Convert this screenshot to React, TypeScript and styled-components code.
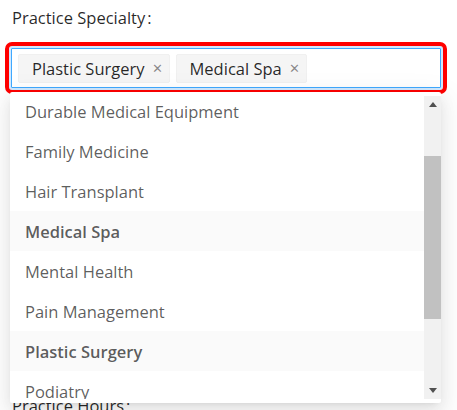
import React from "react";
import styled, { createGlobalStyle } from "styled-components";

const Global = createGlobalStyle`
  html, body { margin: 0; padding: 0; background: #fff; }
  body { font-family: "Open Sans", "Noto Sans", sans-serif; font-size: 16.5px; overflow: hidden; }
  * { box-sizing: border-box; }
`;

const Page = styled.div`
  width: 457px;
  height: 410px;
  padding: 0 16px 0 11px;
  overflow: hidden;
`;

const FormItem = styled.div<{ $gap?: number }>`
  display: flex;
  flex-direction: column;
  margin-bottom: ${(p) => p.$gap ?? 0}px;
`;

const Label = styled.label<{ $top?: number }>`
  display: block;
  padding-top: ${(p) => p.$top ?? 0}px;
  padding-left: 1px;
  line-height: 24px;
  font-size: 16.5px;
  color: rgba(0, 0, 0, 0.85);
  &::after {
    content: ":";
    margin: 0 8px 0 2px;
  }
`;

const SelectWrap = styled.div`
  position: relative;
  margin-top: 18px;
`;

const SelectBox = styled.div`
  display: flex;
  align-items: center;
  gap: 6px;
  width: 430px;
  height: 40px;
  padding: 0 6px;
  border: 1px solid #40a9ff;
  border-radius: 1px;
  background: #fff;
  box-shadow: 0 0 0 2px rgba(24, 144, 255, 0.2);
  outline: 4px solid #ff0000;
  outline-offset: 2px;
`;

const Tag = styled.span`
  display: inline-flex;
  align-items: center;
  height: 29px;
  padding: 0 6px 0 13px;
  background: #f5f5f5;
  border: 1px solid #f0f0f0;
  border-radius: 2px;
  color: rgba(0, 0, 0, 0.85);
  font-size: 16.5px;
  white-space: nowrap;
`;

const TagClose = styled.span`
  margin-left: 7px;
  color: rgba(0, 0, 0, 0.45);
  font-size: 13px;
  line-height: 1;
`;

const Dropdown = styled.div`
  position: absolute;
  z-index: 10;
  top: calc(100% + 4px);
  left: -1px;
  width: 431px;
  padding: 4px 0;
  background: #fff;
  border-radius: 2px;
  box-shadow: 0 3px 6px -4px rgba(0, 0, 0, 0.12), 0 6px 16px 0 rgba(0, 0, 0, 0.08),
    0 9px 28px 8px rgba(0, 0, 0, 0.05);
  display: flex;
`;

const Viewport = styled.div`
  flex: 1;
  height: 303px;
  overflow: hidden;
`;

const Rows = styled.div`
  margin-top: -5px;
`;

const Option = styled.div<{ $selected?: boolean }>`
  height: 40px;
  display: flex;
  align-items: center;
  padding: 0 15px;
  font-size: 16.5px;
  color: rgba(0, 0, 0, 0.65);
  font-weight: ${(p) => (p.$selected ? 600 : 400)};
  background: ${(p) => (p.$selected ? "#fafafa" : "transparent")};
  white-space: nowrap;
`;

const ScrollTrack = styled.div`
  width: 17px;
  height: 303px;
  background: #f1f1f1;
  display: flex;
  flex-direction: column;
  align-items: center;
`;

const ArrowButton = styled.div`
  height: 17px;
  width: 17px;
  display: flex;
  align-items: center;
  justify-content: center;
`;

const Thumb = styled.div`
  width: 17px;
  height: 163px;
  margin-top: 43px;
  background: #c1c1c1;
`;

const Spacer = styled.div`
  flex: 1;
`;

const Arrow = ({ dir }: { dir: "up" | "down" }) => (
  <svg width="8" height="5" viewBox="0 0 8 5">
    <path d={dir === "up" ? "M0 5 L4 0 L8 5 Z" : "M0 0 L4 5 L8 0 Z"} fill="#505050" />
  </svg>
);

const options: { name: string; selected?: boolean }[] = [
  { name: "Durable Medical Equipment" },
  { name: "Family Medicine" },
  { name: "Hair Transplant" },
  { name: "Medical Spa", selected: true },
  { name: "Mental Health" },
  { name: "Pain Management" },
  { name: "Plastic Surgery", selected: true },
  { name: "Podiatry" },
];

export default function App() {
  return (
    <Page>
      <Global />
      <FormItem $gap={306}>
        <Label $top={6}>Practice Specialty</Label>
        <SelectWrap>
          <SelectBox>
            <Tag>
              Plastic Surgery<TagClose>✕</TagClose>
            </Tag>
            <Tag>
              Medical Spa<TagClose>✕</TagClose>
            </Tag>
          </SelectBox>
          <Dropdown>
            <Viewport>
              <Rows>
                {options.map((o) => (
                  <Option key={o.name} $selected={o.selected}>
                    {o.name}
                  </Option>
                ))}
              </Rows>
            </Viewport>
            <ScrollTrack>
              <ArrowButton>
                <Arrow dir="up" />
              </ArrowButton>
              <Thumb />
              <Spacer />
              <ArrowButton>
                <Arrow dir="down" />
              </ArrowButton>
            </ScrollTrack>
          </Dropdown>
        </SelectWrap>
      </FormItem>
      <FormItem>
        <Label>Practice Hours</Label>
      </FormItem>
    </Page>
  );
}
